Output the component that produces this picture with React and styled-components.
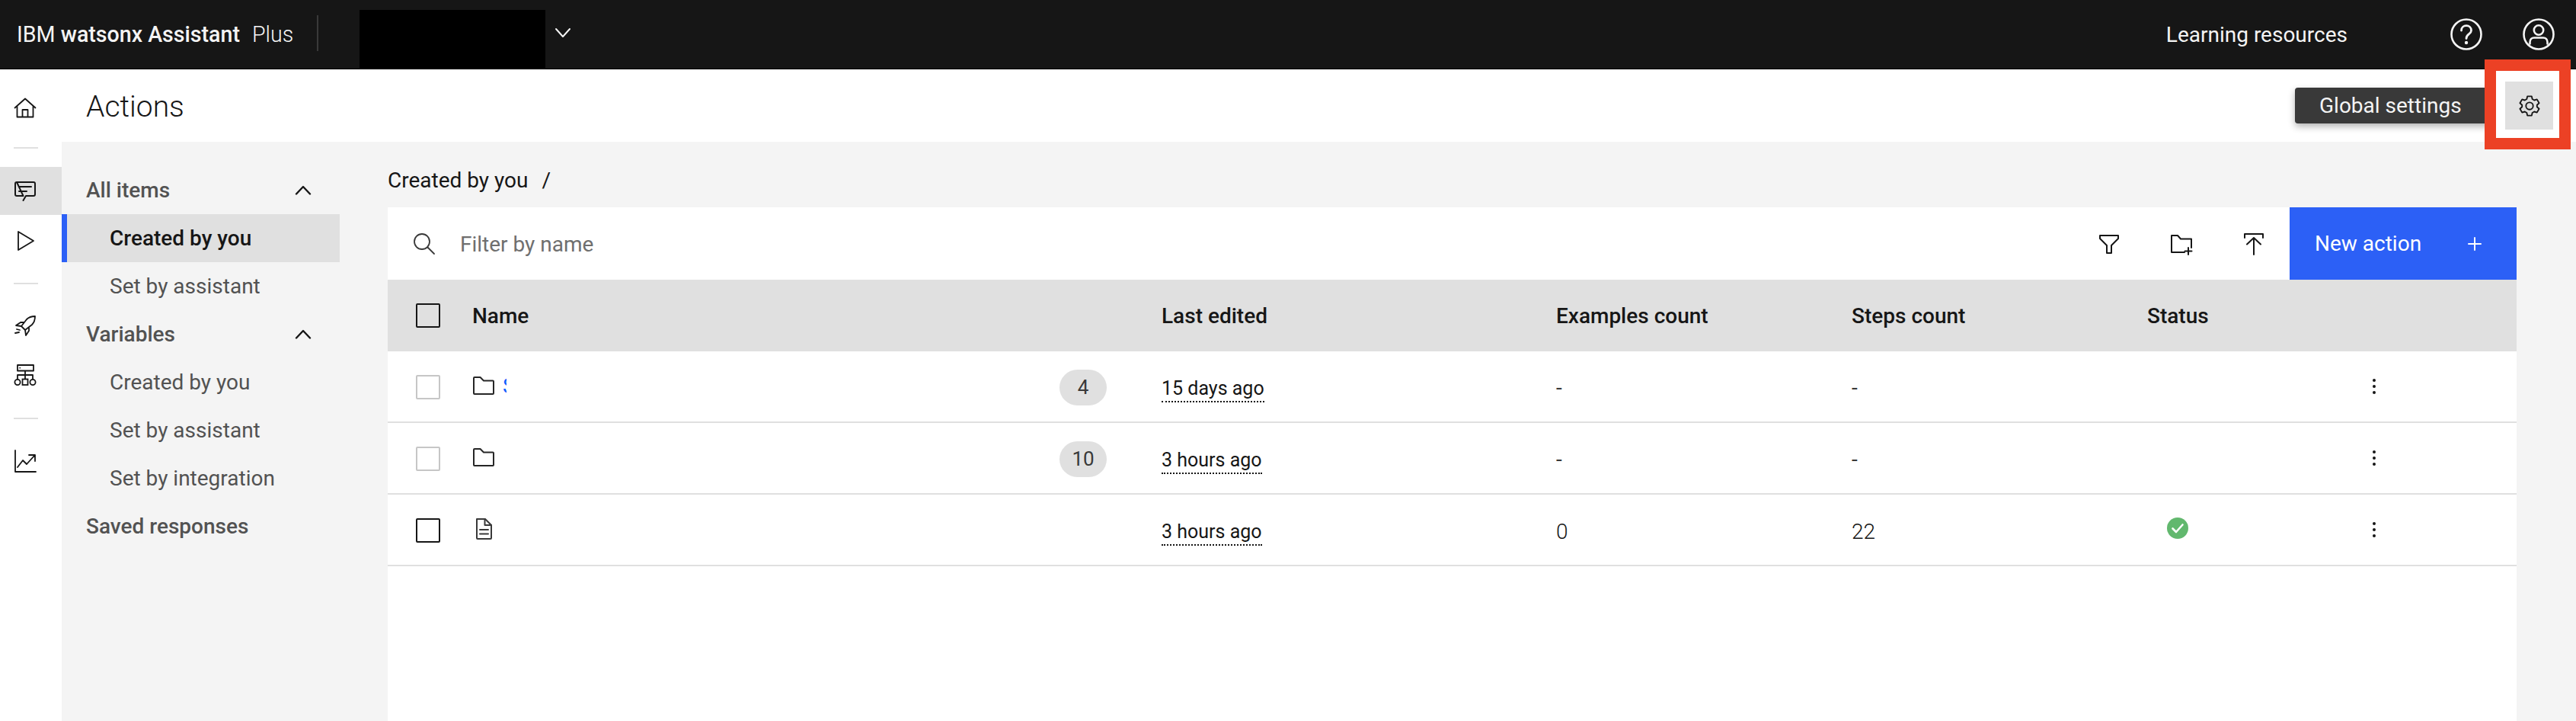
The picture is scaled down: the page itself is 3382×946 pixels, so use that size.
import React from "react";
import styled, { createGlobalStyle } from "styled-components";

const GlobalStyle = createGlobalStyle`
  html, body {
    margin: 0;
    padding: 0;
    background: #f4f4f4;
    overflow: hidden;
  }
  * { box-sizing: border-box; }
  body {
    font-family: "Roboto", "Liberation Sans", sans-serif;
    font-size: 28px;
    color: #161616;
  }
`;

const Page = styled.div`
  width: 3382px;
  height: 946px;
  display: flex;
  flex-direction: column;
  overflow: hidden;
`;

const Header = styled.header`
  flex: none;
  height: 91px;
  background: #161616;
  border-bottom: 1px solid #000;
  display: flex;
  align-items: center;
  color: #f4f4f4;
  padding-left: 22px;
`;

const Brand = styled.div`
  font-size: 28.6px;
  white-space: nowrap;
  width: 394px;
  b { font-weight: 500; }
  span { margin-left: 16px; font-weight: 300; }
`;

const HeaderDivider = styled.div`
  width: 2px;
  height: 47px;
  background: #393939;
  margin-bottom: 4px;
`;

const Redacted = styled.div`
  width: 244px;
  height: 78px;
  background: #000;
  align-self: flex-end;
  margin-left: 54px;
  margin-bottom: -1px;
`;

const HeaderChevron = styled.svg`
  width: 22px;
  height: 14px;
  margin-left: 12px;
  margin-bottom: 4px;
`;

const HeaderRight = styled.div`
  margin-left: auto;
  display: flex;
  align-items: center;
  padding-right: 28px;
`;

const HeaderLink = styled.span`
  font-size: 28px;
  margin-right: 135px;
`;

const HeaderIcon = styled.svg`
  width: 42px;
  height: 42px;
  margin-left: ${(p) => p.$gap || 0}px;
`;

const Body = styled.div`
  flex: 1;
  display: flex;
  min-height: 0;
`;

const Rail = styled.nav`
  flex: none;
  width: 81px;
  background: #fff;
  display: flex;
  flex-direction: column;
`;

const RailItem = styled.div`
  height: ${(p) => p.$h || 63}px;
  flex: none;
  display: flex;
  align-items: center;
  padding-left: 18px;
  background: ${(p) => (p.$active ? "#e0e0e0" : "transparent")};
`;

const RailDivider = styled.div`
  flex: none;
  width: 32px;
  height: 2px;
  background: #e0e0e0;
  margin: ${(p) => p.$top}px 0 ${(p) => p.$bottom}px 18px;
`;

const RailIcon = styled.svg`
  width: 30px;
  height: 30px;
`;

const Content = styled.div`
  flex: 1;
  display: flex;
  flex-direction: column;
  min-width: 0;
`;

const SubHeader = styled.div`
  flex: none;
  height: 95px;
  background: #fff;
  display: flex;
  align-items: flex-start;
  justify-content: space-between;
  padding: 16px 30px 0 32px;
`;

const Title = styled.h1`
  margin: 0;
  font-size: 39px;
  font-weight: 300;
  line-height: 66px;
`;

const GearWrap = styled.div`
  position: relative;
  width: 63px;
  height: 63px;
`;

const GearButton = styled.button`
  position: relative;
  width: 63px;
  height: 63px;
  border: 0;
  padding: 0;
  background: #e0e0e0;
  display: flex;
  align-items: center;
  justify-content: center;
`;

const Tooltip = styled.div`
  position: absolute;
  top: 8px;
  right: 39px;
  width: 300px;
  height: 47px;
  padding-left: 32px;
  background: #393939;
  color: #f4f4f4;
  border-radius: 4px;
  font-size: 28px;
  line-height: 47px;
  white-space: nowrap;
  box-shadow: 0 4px 10px rgba(0, 0, 0, 0.3);
`;

const Callout = styled.div`
  position: absolute;
  top: -29px;
  left: -27px;
  width: 113px;
  height: 118px;
  border: 15px solid #ec4125;
  pointer-events: none;
`;

const CalloutMat = styled.div`
  position: absolute;
  top: -14px;
  left: -12px;
  width: 83px;
  height: 88px;
  background: #fff;
`;

const Workspace = styled.div`
  flex: 1;
  display: flex;
  min-height: 0;
  background: #f4f4f4;
`;

const SideNav = styled.aside`
  flex: none;
  width: 428px;
  padding-top: 32px;
`;

const NavGroup = styled.div`
  height: 63px;
  width: 365px;
  padding-left: 32px;
  padding-right: 37px;
  display: flex;
  align-items: center;
  justify-content: space-between;
  font-size: 28px;
  font-weight: 500;
  color: #525252;
`;

const NavItem = styled.div`
  height: 63px;
  width: 365px;
  display: flex;
  align-items: center;
  padding-left: ${(p) => (p.$active ? 56 : 63)}px;
  font-size: 28px;
  font-weight: ${(p) => (p.$active ? 500 : 400)};
  color: ${(p) => (p.$active ? "#161616" : "#525252")};
  background: ${(p) => (p.$active ? "#e0e0e0" : "transparent")};
  border-left: ${(p) => (p.$active ? "7px solid #2c60f6" : "0")};
`;

const Chevron = styled.svg`
  width: 22px;
  height: 13px;
`;

const Main = styled.main`
  flex: 1;
  min-width: 0;
  padding-right: 78px;
  display: flex;
  flex-direction: column;
`;

const Breadcrumb = styled.div`
  flex: none;
  height: 86px;
  padding-top: 31px;
  font-size: 28px;
  line-height: 40px;
  white-space: nowrap;
  span { margin-left: 18px; }
`;

const Panel = styled.section`
  flex: 1;
  background: #fff;
`;

const Toolbar = styled.div`
  height: 95px;
  display: flex;
  align-items: center;
`;

const SearchIcon = styled.svg`
  width: 30px;
  height: 30px;
  margin-left: 33px;
`;

const Filter = styled.span`
  font-size: 28px;
  color: #6f6f6f;
  margin-left: 32px;
  padding-top: 2px;
`;

const ToolIcons = styled.div`
  margin-left: auto;
  display: flex;
  align-items: center;
  gap: 65px;
  margin-right: 32px;
`;

const ToolIcon = styled.svg`
  width: 30px;
  height: 30px;
`;

const NewAction = styled.button`
  width: 298px;
  height: 95px;
  border: 0;
  background: #2c60f6;
  color: #fff;
  font: inherit;
  font-size: 28px;
  display: flex;
  align-items: center;
  justify-content: space-between;
  padding: 0 46px 0 33px;
`;

const PlusGlyph = styled.svg`
  width: 18px;
  height: 18px;
`;

const Row = styled.div`
  display: grid;
  grid-template-columns: 111px 905px 518px 388px 388px 294px 1fr;
  align-items: center;
  height: 94px;
  padding-top: ${(p) => (p.$head ? 0 : 2)}px;
  font-size: 28px;
  font-weight: ${(p) => (p.$head ? 500 : 400)};
  background: ${(p) => (p.$head ? "#e0e0e0" : "#fff")};
  border-bottom: ${(p) => (p.$head ? "0" : "2px solid #e0e0e0")};
`;

const CheckCell = styled.div`
  padding-left: 37px;
`;

const Check = styled.div`
  width: 32px;
  height: 32px;
  border: 2px solid ${(p) => (p.$muted ? "#c6c6c6" : "#161616")};
  border-radius: 2px;
`;

const NameCell = styled.div`
  display: flex;
  align-items: center;
  padding-right: 72px;
`;

const FileIcon = styled.svg`
  width: 30px;
  height: 30px;
  margin-top: -4px;
`;

const ClippedName = styled.span`
  width: 5px;
  margin-left: 10px;
  overflow: hidden;
  color: #0f62fe;
  font-size: 28px;
  margin-top: -4px;
`;

const Badge = styled.span`
  margin-left: auto;
  width: 62px;
  height: 47px;
  border-radius: 24px;
  background: #e0e0e0;
  display: flex;
  align-items: center;
  justify-content: center;
  color: #393939;
  font-size: 26px;
`;

const Edited = styled.span`
  justify-self: start;
  font-size: 25px;
  line-height: 32px;
  border-bottom: 2px dotted #161616;
  margin-top: 6px;
`;

const Dash = styled.span`
  color: #393939;
`;

const Count = styled.span`
  font-weight: 300;
  color: #161616;
  margin-top: 2px;
`;

const StatusIcon = styled.svg`
  width: 30px;
  height: 30px;
  margin-left: 25px;
  margin-top: -6px;
`;

const Kebab = styled.svg`
  width: 8px;
  height: 22px;
  margin-top: -2px;
`;

const Stroke = ({ d, c = "#161616", w = 1.6 }) => (
  <path d={d} fill="none" stroke={c} strokeWidth={w} strokeLinejoin="round" strokeLinecap="round" />
);

const ChevronUp = () => (
  <Chevron viewBox="0 0 22 13">
    <Stroke d="M2 11.5 L11 2 L20 11.5" w={2.4} />
  </Chevron>
);

const Folder = () => (
  <FileIcon viewBox="0 0 30 30">
    <Stroke d="M3 4 H10.5 L15 8.5 H27 Q28 8.5 28 9.5 V25 Q28 26 27 26 H3 Q2 26 2 25 V5 Q2 4 3 4 Z" w={2} c="#262626" />
  </FileIcon>
);

const Doc = () => (
  <FileIcon viewBox="0 0 30 30">
    <Stroke d="M6 2 H17 L25 10 V27 Q25 28 24 28 H7 Q6 28 6 27 Z" w={2} c="#393939" />
    <Stroke d="M16.5 2 V10 H25 M10 16 H21 M10 21.5 H21" w={2} c="#393939" />
  </FileIcon>
);

const Dots = () => (
  <Kebab viewBox="0 0 8 22">
    <circle cx="4" cy="3" r="2" fill="#161616" />
    <circle cx="4" cy="11" r="2" fill="#161616" />
    <circle cx="4" cy="19" r="2" fill="#161616" />
  </Kebab>
);

function App() {
  return (
    <Page>
      <GlobalStyle />
      <Header>
        <Brand>
          IBM <b>watsonx Assistant</b>
          <span>Plus</span>
        </Brand>
        <HeaderDivider />
        <Redacted />
        <HeaderChevron viewBox="0 0 22 14">
          <Stroke d="M2 2 L11 12 L20 2" c="#f4f4f4" w={2} />
        </HeaderChevron>
        <HeaderRight>
          <HeaderLink>Learning resources</HeaderLink>
          <HeaderIcon viewBox="0 0 42 42">
            <circle cx="21" cy="21" r="19.5" fill="none" stroke="#f4f4f4" strokeWidth="2.6" />
            <Stroke d="M14.5 16 C14.5 7.5 27.5 7.5 27.5 16 C27.5 21 21 20.5 21 26.5" c="#f4f4f4" w={2.8} />
            <circle cx="21" cy="32" r="2.2" fill="#f4f4f4" />
          </HeaderIcon>
          <HeaderIcon viewBox="0 0 42 42" $gap={53}>
            <circle cx="21" cy="21" r="19.5" fill="none" stroke="#f4f4f4" strokeWidth="2.6" />
            <circle cx="21" cy="15.5" r="6.2" fill="none" stroke="#f4f4f4" strokeWidth="2.6" />
            <Stroke d="M9.5 33.5 V31.5 C9.5 27.5 12 25.5 15 25.5 H27 C30 25.5 32.5 27.5 32.5 31.5 V33.5" c="#f4f4f4" w={2.6} />
          </HeaderIcon>
        </HeaderRight>
      </Header>
      <Body>
        <Rail>
          <RailItem $h={102}>
            <RailIcon viewBox="0 0 30 30">
              <Stroke d="M1.5 14.5 L15 2.5 L28.5 14.5 M4.5 12 V26.5 H25.5 V12 M11.5 26.5 V17 H18.5 V26.5" w={1.8} />
            </RailIcon>
          </RailItem>
          <RailDivider $top={0} $bottom={24} />
          <RailItem $active>
            <RailIcon viewBox="0 0 30 30">
              <Stroke d="M4 3 H26 Q28 3 28 5 V19 Q28 21 26 21 H16 L12.5 27 M12.5 21 H4 Q2 21 2 19 V5 Q2 3 4 3 Z" w={2} />
              <Stroke d="M7 9 H23 M7 15 H17" w={2} />
            </RailIcon>
          </RailItem>
          <RailItem $h={68}>
            <RailIcon viewBox="0 0 30 30">
              <Stroke d="M6 3 L26 15 L6 27 Z" w={1.8} />
            </RailIcon>
          </RailItem>
          <RailDivider $top={21} $bottom={23} />
          <RailItem>
            <RailIcon viewBox="0 0 30 30">
              <Stroke d="M15 20 L10 15 L17 6 C20 3 24 2 28 2 C28 6 27 10 24 13 L15 20 Z M10 15 L3 14 L9 10 H13 M15 20 L16 27 L20 21 V17 M7 23 L2 24 M8 20 L4 19" w={1.8} />
            </RailIcon>
          </RailItem>
          <RailItem $h={66}>
            <RailIcon viewBox="0 0 30 30">
              <Stroke d="M5 2 H26 V9.5 H5 Z M15 9.5 V20 M5 15 H25 M5 15 V20 M25 15 V20" w={1.8} />
              <Stroke d="M8 5.7 H8.4" w={1.6} />
              <circle cx="5" cy="24.5" r="3.6" fill="none" stroke="#161616" strokeWidth="1.8" />
              <rect x="11.5" y="20.5" width="7" height="7.5" fill="none" stroke="#161616" strokeWidth="1.8" />
              <circle cx="25" cy="24.5" r="3.6" fill="none" stroke="#161616" strokeWidth="1.8" />
            </RailIcon>
          </RailItem>
          <RailDivider $top={23} $bottom={23} />
          <RailItem>
            <RailIcon viewBox="0 0 30 30">
              <Stroke d="M2 1 V29 H29 M5 23 L12 14 L17 19 L27 8 M20 7 H28 V15" w={1.8} />
            </RailIcon>
          </RailItem>
        </Rail>
        <Content>
          <SubHeader>
            <Title>Actions</Title>
            <GearWrap>
              <Tooltip>Global settings</Tooltip>
              <CalloutMat />
              <GearButton>
                <svg width="30" height="30" viewBox="0 0 32 32">
                  <path
                    d="M13 2.5 H19 L19.9 6.4 L22.6 8 L26.4 6.8 L29.4 12 L26.5 14.7 V17.3 L29.4 20 L26.4 25.2 L22.6 24 L19.9 25.6 L19 29.5 H13 L12.1 25.6 L9.4 24 L5.6 25.2 L2.6 20 L5.5 17.3 V14.7 L2.6 12 L5.6 6.8 L9.4 8 L12.1 6.4 Z"
                    fill="none"
                    stroke="#161616"
                    strokeWidth="2"
                    strokeLinejoin="round"
                  />
                  <circle cx="16" cy="16" r="5" fill="none" stroke="#161616" strokeWidth="2" />
                </svg>
              </GearButton>
              <Callout />
            </GearWrap>
          </SubHeader>
          <Workspace>
            <SideNav>
              <NavGroup>
                All items
                <ChevronUp />
              </NavGroup>
              <NavItem $active>Created by you</NavItem>
              <NavItem>Set by assistant</NavItem>
              <NavGroup>
                Variables
                <ChevronUp />
              </NavGroup>
              <NavItem>Created by you</NavItem>
              <NavItem>Set by assistant</NavItem>
              <NavItem>Set by integration</NavItem>
              <NavGroup>Saved responses</NavGroup>
            </SideNav>
            <Main>
              <Breadcrumb>
                Created by you<span>/</span>
              </Breadcrumb>
              <Panel>
                <Toolbar>
                  <SearchIcon viewBox="0 0 30 30">
                    <circle cx="12" cy="12" r="10" fill="none" stroke="#393939" strokeWidth="1.8" />
                    <Stroke d="M19.5 19.5 L28 28" c="#393939" w={1.8} />
                  </SearchIcon>
                  <Filter>Filter by name</Filter>
                  <ToolIcons>
                    <ToolIcon viewBox="0 0 30 30">
                      <Stroke d="M3 4 H27 V8 L18 17 V27 H12 V17 L3 8 Z" w={2} />
                    </ToolIcon>
                    <ToolIcon viewBox="0 0 30 30">
                      <Stroke d="M2 4 H10 L14 8.5 H28 V20 M19 26 H2 V4 M24 20 V29 M19.5 24.5 H28.5" w={2} />
                    </ToolIcon>
                    <ToolIcon viewBox="0 0 30 30">
                      <Stroke d="M3 7 V2 H27 V7 M15 29 V7 M6 15.5 L15 7 L24 15.5" w={2} />
                    </ToolIcon>
                  </ToolIcons>
                  <NewAction>
                    New action
                    <PlusGlyph viewBox="0 0 18 18">
                      <Stroke d="M9 1 V17 M1 9 H17" c="#fff" w={2} />
                    </PlusGlyph>
                  </NewAction>
                </Toolbar>
                <Row $head>
                  <CheckCell>
                    <Check />
                  </CheckCell>
                  <span>Name</span>
                  <span>Last edited</span>
                  <span>Examples count</span>
                  <span>Steps count</span>
                  <span>Status</span>
                  <span />
                </Row>
                <Row>
                  <CheckCell>
                    <Check $muted />
                  </CheckCell>
                  <NameCell>
                    <Folder />
                    <ClippedName>S</ClippedName>
                    <Badge>4</Badge>
                  </NameCell>
                  <Edited>15 days ago</Edited>
                  <Dash>-</Dash>
                  <Dash>-</Dash>
                  <span />
                  <Dots />
                </Row>
                <Row>
                  <CheckCell>
                    <Check $muted />
                  </CheckCell>
                  <NameCell>
                    <Folder />
                    <Badge>10</Badge>
                  </NameCell>
                  <Edited>3 hours ago</Edited>
                  <Dash>-</Dash>
                  <Dash>-</Dash>
                  <span />
                  <Dots />
                </Row>
                <Row>
                  <CheckCell>
                    <Check />
                  </CheckCell>
                  <NameCell>
                    <Doc />
                  </NameCell>
                  <Edited>3 hours ago</Edited>
                  <Count>0</Count>
                  <Count>22</Count>
                  <StatusIcon viewBox="0 0 30 30">
                    <circle cx="15" cy="15" r="14" fill="#62b86e" />
                    <Stroke d="M8.5 15.5 L13 20 L21.5 10.5" c="#fff" w={2.6} />
                  </StatusIcon>
                  <Dots />
                </Row>
              </Panel>
            </Main>
          </Workspace>
        </Content>
      </Body>
    </Page>
  );
}

export default App;
